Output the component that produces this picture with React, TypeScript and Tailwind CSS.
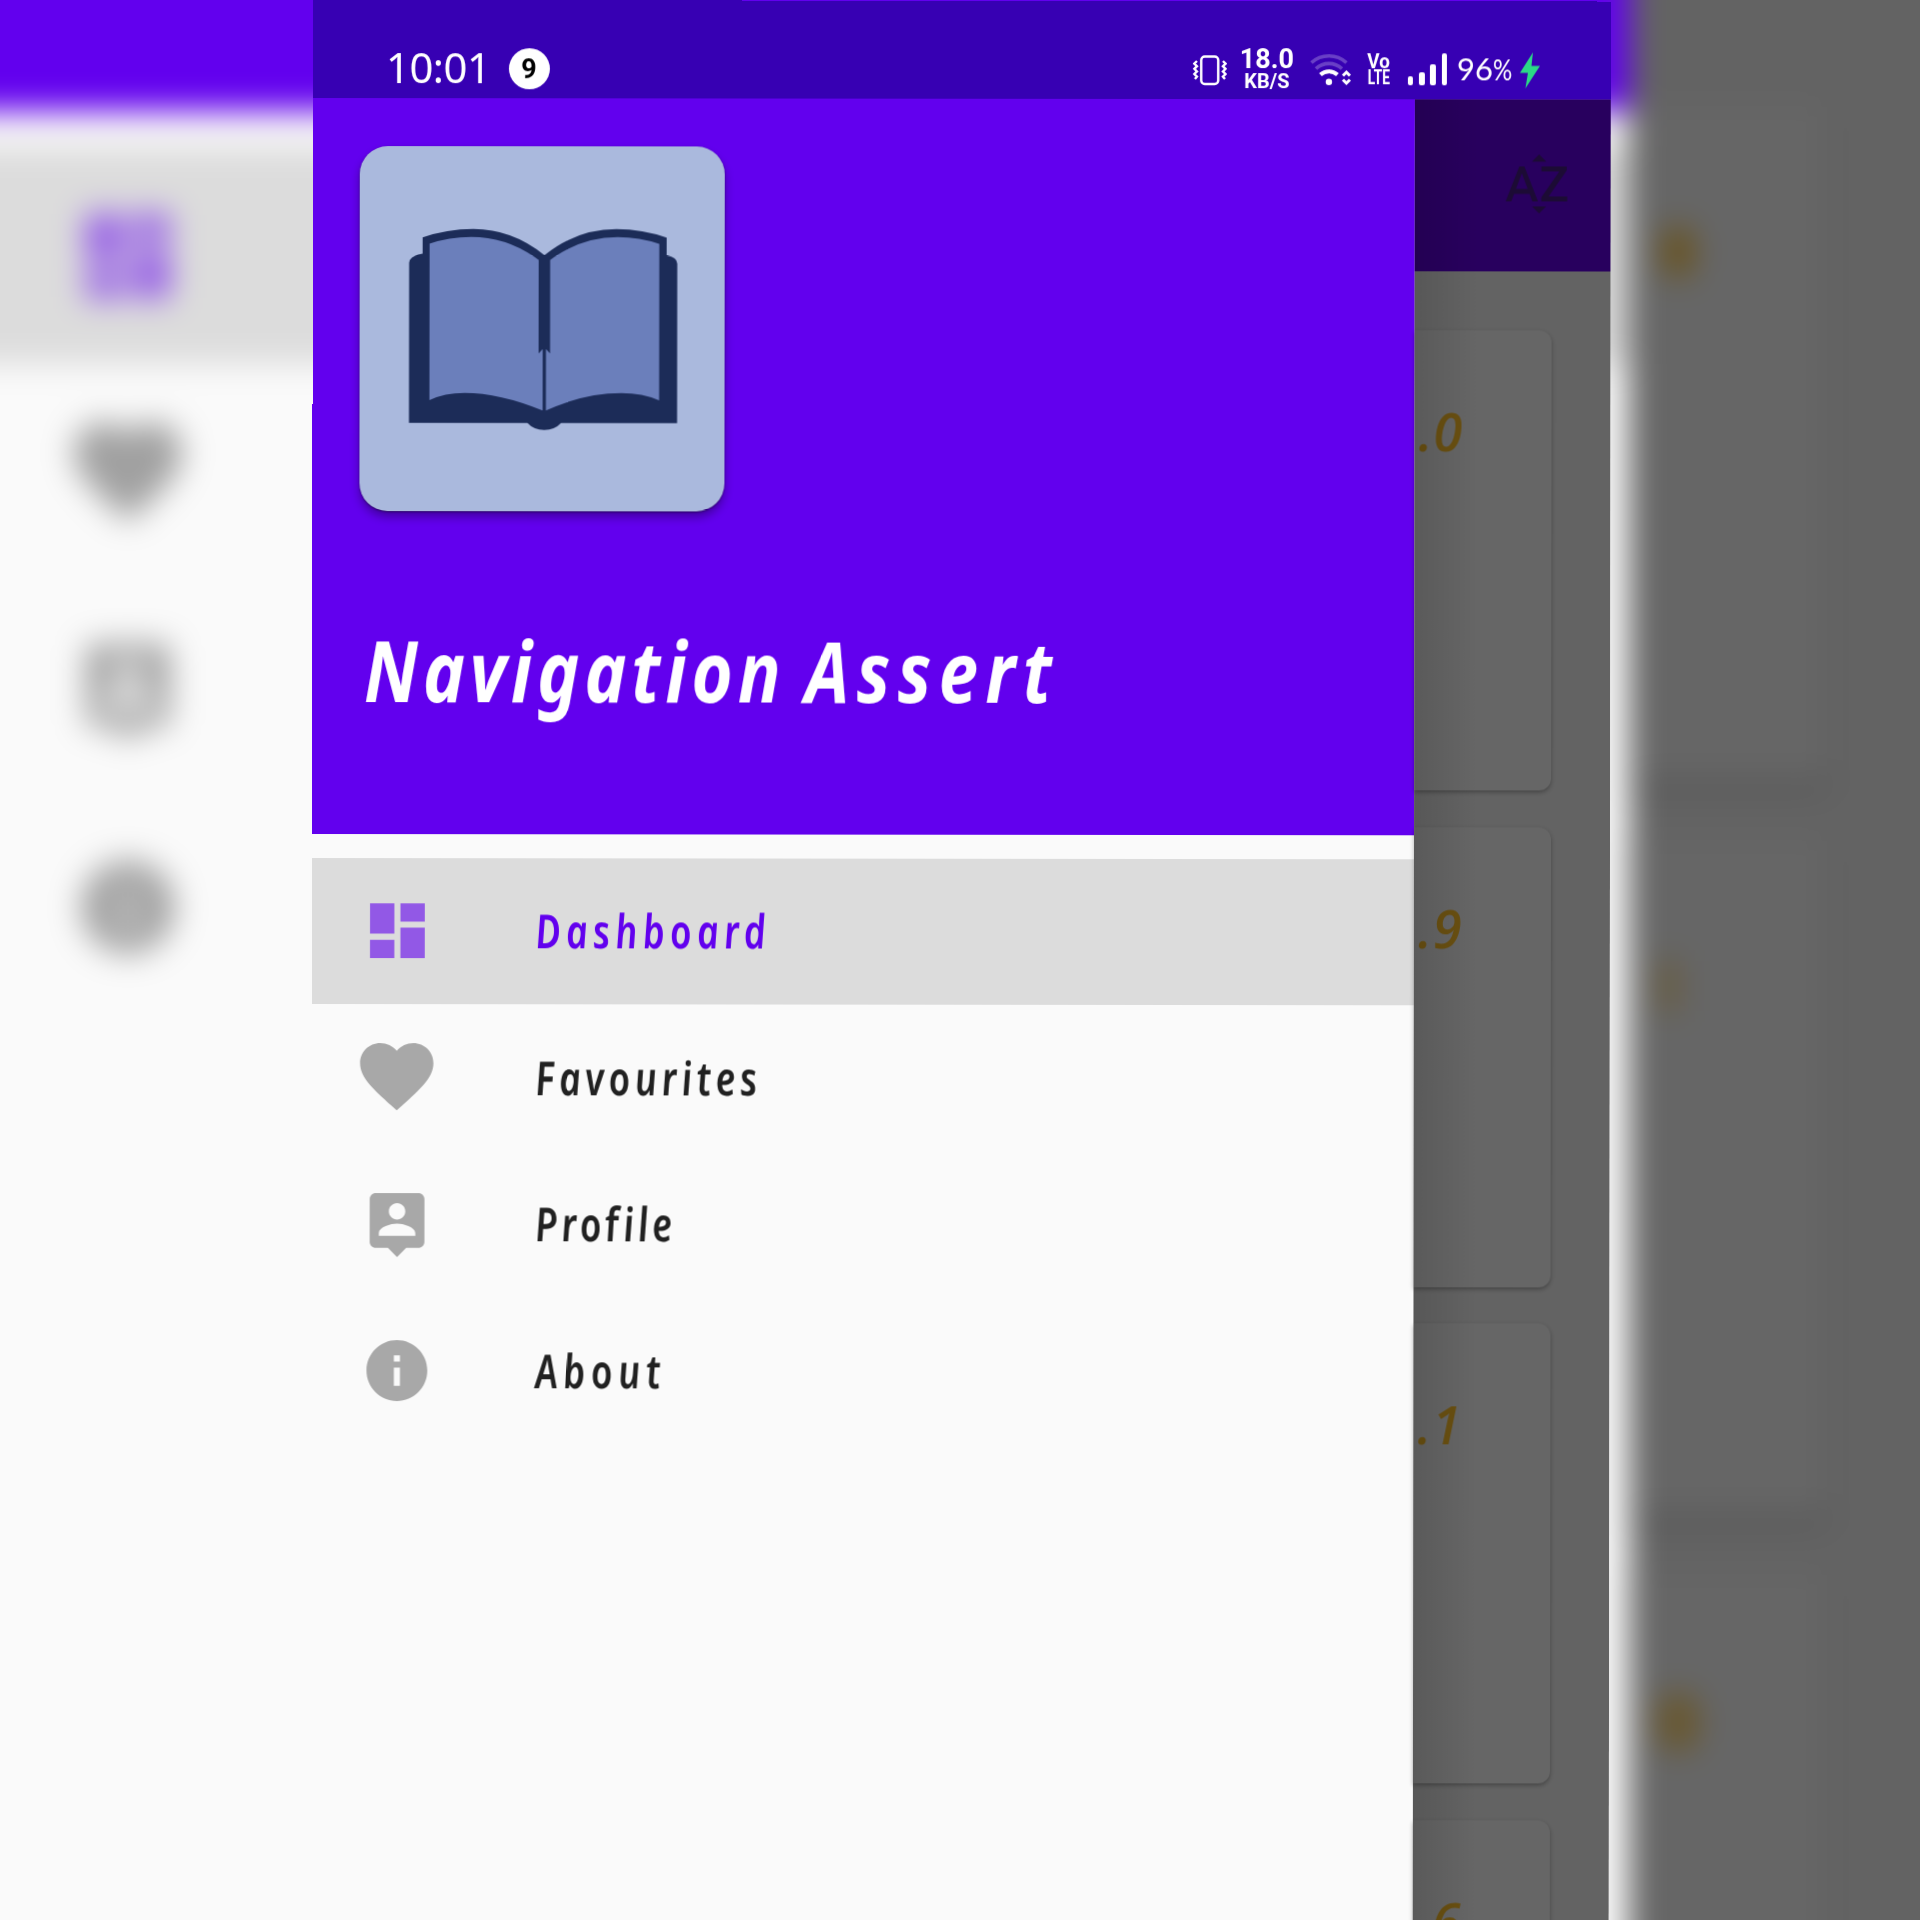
import type { ReactNode } from "react";
import { MdDashboard, MdFavorite, MdInfo, MdSortByAlpha } from "react-icons/md";

type IconProps = { className?: string };
type MenuItem = {
  label: ReactNode;
  icon: (props: IconProps) => ReactNode;
  iconClass: string;
  textClass: string;
  active?: boolean;
};

function PersonPinIcon({ className }: IconProps) {
  return (
    <svg className={className} viewBox="0 0 24 24" fill="currentColor">
      <path d="M19 2H5c-1.110 0-2 .9-2 2v14c0 1.100.89 2 2 2h4l3 3 3-3h4c1.100 0 2-.9 2-2V4c0-1.100-.9-2-2-2zm-7 3.300c1.490 0 2.700 1.210 2.700 2.700 0 1.490-1.210 2.700-2.700 2.700-1.490 0-2.700-1.210-2.700-2.700 0-1.490 1.210-2.700 2.700-2.700zM18 16H6v-.9c0-2 4-3.100 6-3.100s6 1.100 6 3.100v.9z" />
    </svg>
  );
}

const MENU: MenuItem[] = [
  { label: "Dashboard", icon: MdDashboard, iconClass: "size-[73px]", textClass: "tracking-[6.4px]", active: true },
  { label: "Favourites", icon: MdFavorite, iconClass: "size-[88px] -mt-[4px]", textClass: "tracking-[5.6px]" },
  {
    label: (
      <>
        Pro<span className="inline-block -skew-x-[11deg] not-italic">f</span>ile
      </>
    ),
    icon: PersonPinIcon,
    iconClass: "size-[73px] -mt-[1px]",
    textClass: "tracking-[4.8px]",
  },
  { label: "About", icon: MdInfo, iconClass: "size-[73px] -mt-[1px]", textClass: "tracking-[7px]" },
];

const BACKDROP_ICONS = [
  { icon: MdDashboard, cls: "size-[112px]" },
  { icon: MdFavorite, cls: "size-[132px] -mt-[3px]" },
  { icon: PersonPinIcon, cls: "size-[112px]" },
  { icon: MdInfo, cls: "size-[112px] mt-[1px]" },
];

const RATINGS = [".0", ".9", ".1", ".6"];

function BackdropCard({ children }: { children?: ReactNode }) {
  return (
    <div className="h-[680px] w-[200px] shrink-0 rounded-r-[18px] bg-[#666666] pt-[124px] pl-[10px] shadow-[0_5px_8px_rgba(0,0,0,0.3)]">
      {children}
    </div>
  );
}

function Backdrop() {
  return (
    <div className="absolute -inset-12 flex bg-[#636363] blur-[16px]">
      <div className="flex w-[1678px] shrink-0 flex-col bg-[#fafafa]">
        <div className="h-[159px] shrink-0 bg-[#6200ee]" />
        <div className="mt-[36px] flex flex-col">
          {BACKDROP_ICONS.map(({ icon: Icon, cls }, i) => (
            <div
              key={i}
              className={
                i === 0
                  ? "flex h-[217px] items-center bg-[#dcdcdc] pl-[111px] text-[#9258e6]"
                  : "flex h-[217px] items-center bg-[#fafafa] pl-[111px] text-[#a0a0a0]"
              }
            >
              <div className="flex w-[130px] justify-center">
                <Icon className={cls} />
              </div>
            </div>
          ))}
        </div>
      </div>
      <div className="flex flex-col gap-[54px] pt-[151px]">
        <BackdropCard>
          <div className="ml-[24px] h-[50px] w-[28px] rounded-full bg-[#6a5011]" />
        </BackdropCard>
        <BackdropCard>
          <div className="ml-[24px] h-[50px] w-[10px] bg-[#6a5011]" />
        </BackdropCard>
        <BackdropCard>
          <div className="ml-[20px] h-[54px] w-[36px] rounded-full border-[13px] border-[#6a5011]" />
        </BackdropCard>
      </div>
    </div>
  );
}

function VibrateIcon() {
  return (
    <svg className="h-[31px] w-[34px]" viewBox="0 0 34 31" fill="none" stroke="#fff">
      <rect x="8.3" y="1.5" width="17" height="27.5" rx="3.5" strokeWidth="2.4" />
      <path
        d="M4 6l-2.600 2.600L4 11.200 1.400 13.800 4 16.400 1.400 19 4 21.600 2 24M30 6l2.600 2.600L30 11.200l2.600 2.600L30 16.400l2.600 2.600L30 21.600l2 2.400"
        strokeWidth="2.400"
      />
    </svg>
  );
}

function WifiIcon() {
  return (
    <svg className="h-[33px] w-[42px]" viewBox="0 0 42 33" fill="none">
      <path d="M1.500 9.500a26 26 0 0 1 35 0" stroke="#fff" strokeOpacity=".25" strokeWidth="3.600" />
      <path d="M6 15.500a19 19 0 0 1 26 0" stroke="#fff" strokeOpacity=".25" strokeWidth="3.600" />
      <path d="M10.500 21.500a12.500 12.500 0 0 1 17 0" stroke="#fff" strokeWidth="4" />
      <circle cx="19" cy="28.800" r="3.200" fill="#fff" />
      <path d="M33 22.500l3.500-3.500 3.500 3.500M33 26.500l3.500 3.500 3.500-3.500" stroke="#fff" strokeWidth="3" />
    </svg>
  );
}

function StatusBar() {
  return (
    <div className="flex h-[98px] shrink-0 items-start bg-[#3700b3] pr-[71px] pl-[73px] text-white">
      <div className="mt-[42px] w-[105px] font-['Noto_Sans'] text-[42px] leading-[50px] tracking-[-0.6px]">10:01</div>
      <div className="mt-[48px] ml-[17.5px] flex size-[41px] items-center justify-center rounded-full bg-white pt-[2px] font-['Roboto'] text-[27px] leading-none font-bold text-black">
        9
      </div>
      <div className="ml-auto flex items-start">
        <div className="mt-[54px] w-[47px]">
          <VibrateIcon />
        </div>
        <div className="mt-[47px] flex w-[54px] flex-col items-center font-['Roboto'] font-bold">
          <div className="text-[27px] leading-[23px]">18.0</div>
          <div className="text-[20px] leading-[20px] font-bold">KB/S</div>
        </div>
        <div className="mt-[52px] ml-[16px] w-[57px]">
          <WifiIcon />
        </div>
        <div className="mt-[52px] flex w-[24px] flex-col items-center font-['Roboto'] text-[21px] leading-[16px] font-bold">
          <div className="scale-x-90">Vo</div>
          <div className="scale-x-[.66]">LTE</div>
        </div>
        <div className="mt-[52px] ml-[17px] flex h-[32px] items-end gap-[5.7px]">
          <div className="h-[9px] w-[5.500px] rounded-[2px] bg-white" />
          <div className="h-[13px] w-[5.500px] rounded-[2px] bg-white" />
          <div className="h-[21px] w-[5.500px] rounded-[2px] bg-white" />
          <div className="h-[32px] w-[5.500px] rounded-[2px] bg-white" />
        </div>
        <div className="mt-[48px] ml-[10px] flex w-[63px] items-baseline font-['Lato'] text-[31px] leading-[38px]">
          96<span className="w-[22px] origin-left scale-x-[.86] text-[28px]">%</span>
        </div>
        <svg className="mt-[51px] h-[36px] w-[20px]" viewBox="0 0 20 36">
          <path d="M13 0 0 20.500h8L5.500 36 20 13.500h-8.500z" fill="#2bd986" />
        </svg>
      </div>
    </div>
  );
}

function BookLogo() {
  return (
    <svg className="size-full" viewBox="147 425 893 1059" preserveAspectRatio="none">
      <g fill="#1c2c58">
        <path d="M268 1228V764q0-20 33-27V690Q360 665 425 665 520 665 599 741 678 665 775 665 840 665 898 690V741q26 6 26 24V1228H640Q625 1248 599 1248T558 1228Z" />
      </g>
      <g fill="#6b7fbb">
        <path d="M318 708Q365 688 420 688 510 688 585 755V1026L595 1013V1192Q490 1141 404 1141 355 1141 318 1162Z" />
        <path d="M880 708Q833 688 778 688 688 688 613 755V1026L603 1013V1192Q695 1141 788 1141 840 1141 880 1162Z" />
      </g>
    </svg>
  );
}

function Drawer() {
  return (
    <div className="w-[1102px] shrink-0 bg-[#fafafa]">
      <div className="h-[736px] bg-[#6200ee] pt-[48px] pl-[47.4px]">
        <div className="size-[365px] overflow-hidden rounded-[28px] bg-[#aab9dd] shadow-[0_6px_10px_rgba(0,0,0,0.32),0_1px_2px_rgba(0,0,0,0.4)]">
          <BookLogo />
        </div>
        <div className="mt-[101px] h-[115px] w-[695px] overflow-hidden">
          <div className="w-max origin-left scale-x-[.833] pl-[6px] font-['Noto_Sans'] text-[85px] leading-[115px] font-bold tracking-[6px] whitespace-nowrap text-white italic">
            <span className="[word-spacing:-5px]">Navigation </span>
            <span className="tracking-[8.8px]">Assert</span>
          </div>
        </div>
      </div>
      <div className="mt-[23.500px] flex flex-col">
        {MENU.map(({ label, icon: Icon, iconClass, textClass, active }, i) => (
          <div
            key={i}
            className={
              active
                ? "flex h-[146.700px] items-center bg-[#dcdcdc] pl-[41px]"
                : "flex h-[146.700px] items-center pl-[41px]"
            }
          >
            <div className={active ? "flex w-[88px] justify-center text-[#9258e6]" : "flex w-[88px] justify-center text-[#a8a8a8]"}>
              <Icon className={iconClass} />
            </div>
            <div className={active ? "-mt-[1px] ml-[94px] text-[#6200ee]" : "-mt-[2px] ml-[94px] text-[#212121]"}>
              <div className={`${textClass} w-max origin-left scale-x-[.8] skew-x-[7deg] font-['Noto_Sans'] text-[47px] leading-[60px] font-semibold italic`}>
                {label}
              </div>
            </div>
          </div>
        ))}
      </div>
    </div>
  );
}

function Content() {
  return (
    <div className="relative flex-1 bg-[#636363]">
      <div className="h-[172px] bg-[#28005e] pt-[48px] pl-[85.5px]">
        <MdSortByAlpha className="size-[73px] text-[#1c0b35]" />
      </div>
      <div className="mt-[59px] flex flex-col gap-[36.700px]">
        {RATINGS.map((rating) => (
          <div
            key={rating}
            className="h-[460px] w-[137px] rounded-r-[12px] bg-[#666666] pt-[69px] pl-[4px] font-['Open_Sans'] text-[52px] leading-[64px] font-semibold tracking-[1px] text-[#6a5011] italic shadow-[0_2px_4px_rgba(0,0,0,0.3)]"
          >
            {rating}
          </div>
        ))}
      </div>
      <div className="absolute inset-y-0 left-0 w-[64px] bg-gradient-to-r from-black/12 to-transparent" />
    </div>
  );
}

export default function App() {
  return (
    <div className="relative h-[1920px] w-[1920px] overflow-hidden bg-[#636363]">
      <Backdrop />
      <div className="relative ml-[312.650px] flex h-[1924px] w-[1298px] origin-top-left rotate-[0.067deg] flex-col overflow-hidden">
        <StatusBar />
        <div className="flex min-h-0 flex-1">
          <Drawer />
          <Content />
        </div>
      </div>
    </div>
  );
}
